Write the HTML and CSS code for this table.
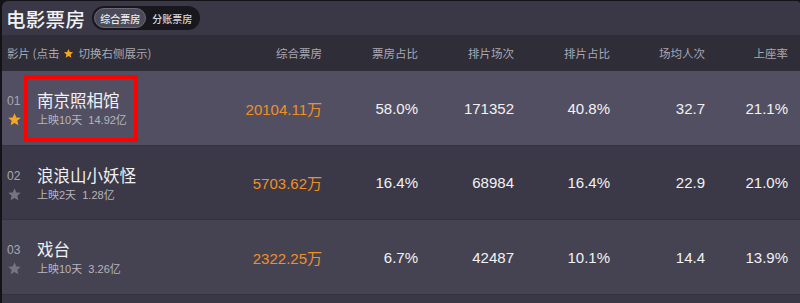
FILE: index.html
```html
<!DOCTYPE html>
<html lang="zh-CN">
<head>
<meta charset="utf-8">
<title>电影票房</title>
<link rel="stylesheet" href="styles.css">
</head>
<body>
<div class="board">
  <div class="topbar">
    <h1 class="title">电影票房</h1>
    <div class="toggle">
      <span class="tab active">综合票房</span>
      <span class="tab">分账票房</span>
    </div>
  </div>
  <div class="grid head">
    <div class="cell first">影片 (点击 <svg class="mini-star" viewBox="0 0 24 24"><path d="M12 2l2.9 6.6 7.1.7-5.4 4.8 1.6 7-6.2-3.7-6.2 3.7 1.6-7L2 9.3l7.1-.7z"/></svg> 切换右侧展示)</div>
    <div class="cell num">综合票房</div>
    <div class="cell num">票房占比</div>
    <div class="cell num">排片场次</div>
    <div class="cell num">排片占比</div>
    <div class="cell num">场均人次</div>
    <div class="cell num">上座率</div>
  </div>
  <div class="grid row r1">
    <div class="cell first movie">
      <div class="rank"><span class="no">01</span><svg class="star on" viewBox="0 0 24 24"><path d="M12 2l2.9 6.6 7.1.7-5.4 4.8 1.6 7-6.2-3.7-6.2 3.7 1.6-7L2 9.3l7.1-.7z"/></svg></div>
      <div class="info"><div class="name">南京照相馆</div><div class="sub">上映10天&nbsp; 14.92亿</div></div>
      <div class="mark"></div>
    </div>
    <div class="cell num box">20104.11万</div>
    <div class="cell num val">58.0%</div>
    <div class="cell num val">171352</div>
    <div class="cell num val">40.8%</div>
    <div class="cell num val">32.7</div>
    <div class="cell num val">21.1%</div>
  </div>
  <div class="grid row r2">
    <div class="cell first movie">
      <div class="rank"><span class="no">02</span><svg class="star" viewBox="0 0 24 24"><path d="M12 2l2.9 6.6 7.1.7-5.4 4.8 1.6 7-6.2-3.7-6.2 3.7 1.6-7L2 9.3l7.1-.7z"/></svg></div>
      <div class="info"><div class="name">浪浪山小妖怪</div><div class="sub">上映2天&nbsp; 1.28亿</div></div>
    </div>
    <div class="cell num box">5703.62万</div>
    <div class="cell num val">16.4%</div>
    <div class="cell num val">68984</div>
    <div class="cell num val">16.4%</div>
    <div class="cell num val">22.9</div>
    <div class="cell num val">21.0%</div>
  </div>
  <div class="grid row r3">
    <div class="cell first movie">
      <div class="rank"><span class="no">03</span><svg class="star" viewBox="0 0 24 24"><path d="M12 2l2.9 6.6 7.1.7-5.4 4.8 1.6 7-6.2-3.7-6.2 3.7 1.6-7L2 9.3l7.1-.7z"/></svg></div>
      <div class="info"><div class="name">戏台</div><div class="sub">上映10天&nbsp; 3.26亿</div></div>
    </div>
    <div class="cell num box">2322.25万</div>
    <div class="cell num val">6.7%</div>
    <div class="cell num val">42487</div>
    <div class="cell num val">10.1%</div>
    <div class="cell num val">14.4</div>
    <div class="cell num val">13.9%</div>
  </div>
  <div class="foot"></div>
</div>
</body>
</html>
```
FILE: styles.css
```css
* { box-sizing: border-box; }
html, body { margin: 0; padding: 0; }
body {
  background: #131217;
  font-family: "Liberation Sans", "Noto Sans CJK SC", sans-serif;
  width: 800px;
  height: 303px;
  overflow: hidden;
}
.board {
  margin: 1px 0 0 2px;
  background: #3a3846;
  border-top-left-radius: 6px;
  border-top-right-radius: 3px;
  height: 302px;
  overflow: hidden;
}
.topbar {
  height: 34px;
  display: flex;
  align-items: center;
  padding-left: 4px;
}
.title {
  margin: 0;
  font-family: "Noto Sans CJK SC", sans-serif;
  font-size: 19.5px;
  font-weight: 500;
  color: #f2f2f4;
  letter-spacing: 0.3px;
}
.toggle {
  margin-left: 7px;
  display: flex;
  align-items: center;
  height: 24px;
  padding: 2px;
  background: #18171d;
  border-radius: 12px;
}
.tab {
  font-family: "Noto Sans CJK SC", sans-serif;
  font-size: 10px;
  font-weight: 500;
  color: #d8d8dc;
  padding: 0 5px;
  height: 20px;
  line-height: 19px;
  border-radius: 10px;
  border: 1px solid transparent;
}
.tab.active {
  background: #4c4a57;
  border-color: #6b6977;
  color: #eeeeef;
}
.grid {
  display: grid;
  grid-template-columns: 236px 96px 96px 96px 96px 95px 83px;
  align-items: center;
}
.head {
  height: 36px;
  background: #2f2d38;
  color: #a9a8b1;
  font-size: 12px;
}
.cell.num {
  text-align: right;
  padding-right: 12px;
}
.head .cell { font-family: "Noto Sans CJK SC", sans-serif; font-size: 11.5px; }
.first { padding-left: 5px; display: flex; align-items: center; }
.mini-star { width: 11px; height: 11px; fill: #f5a623; margin: 0 4px; }
.row { height: 75px; border-bottom: 1px solid #34323f; }
.r1 { background: #524f62; }
.r2 { background: #3b3947; height: 74px; }
.r3 { background: #454352; }
.movie { position: relative; height: 100%; }
.rank {
  width: 30px;
  display: flex;
  flex-direction: column;
  align-items: flex-start;
  margin-top: 5px;
}
.no { font-size: 12px; color: #a8a7b0; line-height: 14px; }
.star { width: 15px; height: 15px; fill: #76747f; margin-top: 4px; }
.star.on { fill: #f5a623; }
.info { display: flex; flex-direction: column; }
.name {
  font-family: "Noto Sans CJK SC", sans-serif;
  font-size: 16.5px;
  line-height: 22px;
  color: #f1f1f3;
}
.sub {
  font-size: 11px;
  line-height: 14px;
  color: #b6b5bd;
  margin-top: 2px;
}
.mark {
  position: absolute;
  left: 22px;
  top: 4px;
  width: 114px;
  height: 67px;
  border: 4px solid #ff0000;
}
.box {
  color: #f08f26;
  font-size: 15px;
}
.val {
  color: #f2f2f4;
  font-size: 15px;
}
.foot { height: 8px; background: #3a3846; }
```
